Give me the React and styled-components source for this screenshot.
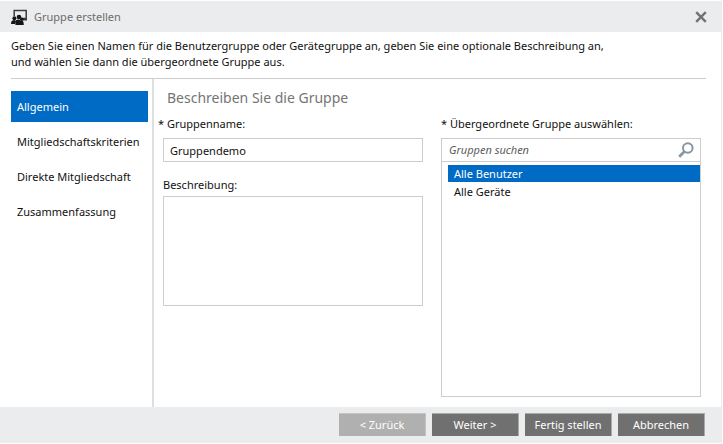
import React, { useState } from "react";
import styled, { createGlobalStyle } from "styled-components";

const GlobalStyle = createGlobalStyle`
  *, *::before, *::after { box-sizing: border-box; }
  body {
    margin: 0;
    background: #fff;
    color: #111;
    font: 11px/16px "Noto Sans", "Open Sans", sans-serif;
  }
  button, input, textarea { font: inherit; color: inherit; }
`;

const Dialog = styled.form`
  display: flex;
  flex-direction: column;
  min-height: 100vh;
  padding: 1px 0;
  margin-right: 1px;
  border-right: 1px solid #ebecee;
`;

const TitleBar = styled.header`
  display: flex;
  align-items: center;
  gap: 6px;
  height: 31px;
  padding: 0 14px 0 11px;
  background: #ebecee;
`;

const Title = styled.h1`
  flex: 1;
  margin: 0;
  color: #6c6c6c;
  font-size: 11px;
  font-weight: 400;
`;

const CloseButton = styled.button`
  display: flex;
  padding: 0;
  border: 0;
  background: none;
`;

const Intro = styled.p`
  margin: 0 15px 0 11px;
  padding: 6px 0 8px;
  border-bottom: 1px solid #cdcdcd;
`;

const Body = styled.div`
  flex: 1;
  display: flex;
  padding-left: 11px;
`;

const Steps = styled.nav`
  flex: 0 0 143px;
  display: flex;
  flex-direction: column;
  gap: 4px;
  padding: 12px 4px 0 0;
  border-right: 2px solid #dedfdf;
`;

const Step = styled.button`
  height: 31px;
  padding: 0 6px;
  border: 0;
  background: ${(p) => (p.$active ? "#006bc4" : "transparent")};
  color: ${(p) => (p.$active ? "#fff" : "#111")};
  text-align: left;
  white-space: nowrap;
`;

const Content = styled.section`
  flex: 1;
  display: flex;
  flex-direction: column;
  padding: 9px 20px 10px 9px;
`;

const Heading = styled.h2`
  margin: 0 0 8px 4px;
  color: #757575;
  font-size: 14px;
  line-height: 20px;
  font-weight: 400;
`;

const Columns = styled.div`
  flex: 1;
  display: grid;
  grid-template-columns: 1fr 1fr;
  gap: 18px;
`;

const Column = styled.div`
  display: flex;
  flex-direction: column;
`;

const Label = styled.label`
  margin-bottom: ${(p) => (p.$required ? "6px" : "3px")};
  margin-left: ${(p) => (p.$hang ? "-5px" : "0")};
  white-space: nowrap;
`;

const TextInput = styled.input`
  width: 100%;
  height: 24px;
  margin-bottom: 15px;
  padding: 0 6px;
  border: 1px solid #cdcdcd;
  background: #fff;
  outline: 0;
`;

const TextArea = styled.textarea`
  width: 100%;
  height: 110px;
  padding: 4px 6px;
  border: 1px solid #cdcdcd;
  resize: none;
  outline: 0;
`;

const Picker = styled.div`
  flex: 1;
  border: 1px solid #cdcdcd;
`;

const SearchBar = styled.div`
  display: flex;
  align-items: center;
  height: 23px;
  padding: 0 6px 0 7px;
  border-bottom: 1px solid #cdcdcd;
`;

const SearchInput = styled.input`
  flex: 1;
  min-width: 0;
  padding: 0;
  border: 0;
  background: none;
  outline: 0;
  font-style: italic;
  &::placeholder { color: #5c5c5c; opacity: 1; }
`;

const GroupList = styled.ul`
  margin: 0;
  padding: 3px 0 0 6px;
  list-style: none;
`;

const GroupItem = styled.button`
  display: block;
  width: 100%;
  height: 17px;
  margin-bottom: 1px;
  padding: 0 6px;
  border: 0;
  background: ${(p) => (p.$selected ? "#006bc4" : "transparent")};
  color: ${(p) => (p.$selected ? "#fff" : "#111")};
  line-height: 16px;
  text-align: left;
`;

const Footer = styled.footer`
  display: flex;
  justify-content: flex-end;
  align-items: flex-start;
  gap: 6px;
  height: 36px;
  padding: 6px 16px 0;
  background: #ebecee;
`;

const FooterButton = styled.button`
  width: 87px;
  height: 23px;
  padding: 0;
  border: 0 solid #a9aaaa;
  border-width: 1px 1px 0 0;
  background: #707070;
  color: #fff;
  white-space: nowrap;
  &:disabled { background: #b0b0b0; border-color: #c3c3c3; }
`;

function GroupIcon() {
  return (
    <svg width="17" height="16" viewBox="0 0 17 16" aria-hidden="true">
      <path d="M3.2 7V1.4H15.2V9.6H10.8" fill="none" stroke="#3c3c3c" strokeWidth="1.5" />
      <path d="M12.4 9.4H16V11.4H11.4Z" fill="#3c3c3c" />
      <circle cx="3.4" cy="9.2" r="2" fill="#151515" />
      <circle cx="8" cy="8" r="2.3" fill="#151515" />
      <path d="M0 15C0 12 1.2 11 3.4 11L5 12L4 15Z" fill="#151515" />
      <path d="M4.4 16V13C4.4 11.4 5.6 10.6 8 10.6L9.6 11.6C12 11.6 12.8 12.6 12.8 16Z" fill="#151515" />
      <circle cx="10.8" cy="10.2" r="1.8" fill="#151515" />
    </svg>
  );
}

function CloseIcon() {
  return (
    <svg width="12" height="12" viewBox="0 0 12 12" aria-hidden="true">
      <path d="M1.2 1.2L10.8 10.8M10.8 1.2L1.2 10.8" stroke="#707276" strokeWidth="2.4" />
    </svg>
  );
}

function SearchIcon() {
  return (
    <svg width="16" height="16" viewBox="0 0 16 16" aria-hidden="true">
      <circle cx="9.8" cy="6" r="4.8" fill="#fff" stroke="#8796a5" strokeWidth="2" />
      <path d="M6.4 9.6L1.2 14.8" stroke="#8796a5" strokeWidth="2.8" />
    </svg>
  );
}

const STEPS = ["Allgemein", "Mitgliedschaftskriterien", "Direkte Mitgliedschaft", "Zusammenfassung"];
const GROUPS = ["Alle Benutzer", "Alle Geräte"];

export default function App() {
  const [step, setStep] = useState(0);
  const [group, setGroup] = useState(0);
  return (
    <>
      <GlobalStyle />
      <Dialog onSubmit={(e) => e.preventDefault()}>
        <TitleBar>
          <GroupIcon />
          <Title>Gruppe erstellen</Title>
          <CloseButton type="button" aria-label="Schließen"><CloseIcon /></CloseButton>
        </TitleBar>
        <Intro>
          Geben Sie einen Namen für die Benutzergruppe oder Gerätegruppe an, geben Sie eine optionale Beschreibung an,
          <br />
          und wählen Sie dann die übergeordnete Gruppe aus.
        </Intro>
        <Body>
          <Steps>
            {STEPS.map((name, i) => (
              <Step key={name} type="button" $active={i === step} onClick={() => setStep(i)}>{name}</Step>
            ))}
          </Steps>
          <Content>
            <Heading>Beschreiben Sie die Gruppe</Heading>
            <Columns>
              <Column>
                <Label htmlFor="name" $required $hang>* Gruppenname:</Label>
                <TextInput id="name" defaultValue="Gruppendemo" />
                <Label htmlFor="description">Beschreibung:</Label>
                <TextArea id="description" />
              </Column>
              <Column>
                <Label htmlFor="search" $required>* Übergeordnete Gruppe auswählen:</Label>
                <Picker>
                  <SearchBar>
                    <SearchInput id="search" placeholder="Gruppen suchen" />
                    <SearchIcon />
                  </SearchBar>
                  <GroupList>
                    {GROUPS.map((name, i) => (
                      <li key={name}>
                        <GroupItem type="button" $selected={i === group} onClick={() => setGroup(i)}>{name}</GroupItem>
                      </li>
                    ))}
                  </GroupList>
                </Picker>
              </Column>
            </Columns>
          </Content>
        </Body>
        <Footer>
          <FooterButton type="button" disabled>&lt; Zurück</FooterButton>
          <FooterButton type="submit">Weiter &gt;</FooterButton>
          <FooterButton type="button">Fertig stellen</FooterButton>
          <FooterButton type="button">Abbrechen</FooterButton>
        </Footer>
      </Dialog>
    </>
  );
}
